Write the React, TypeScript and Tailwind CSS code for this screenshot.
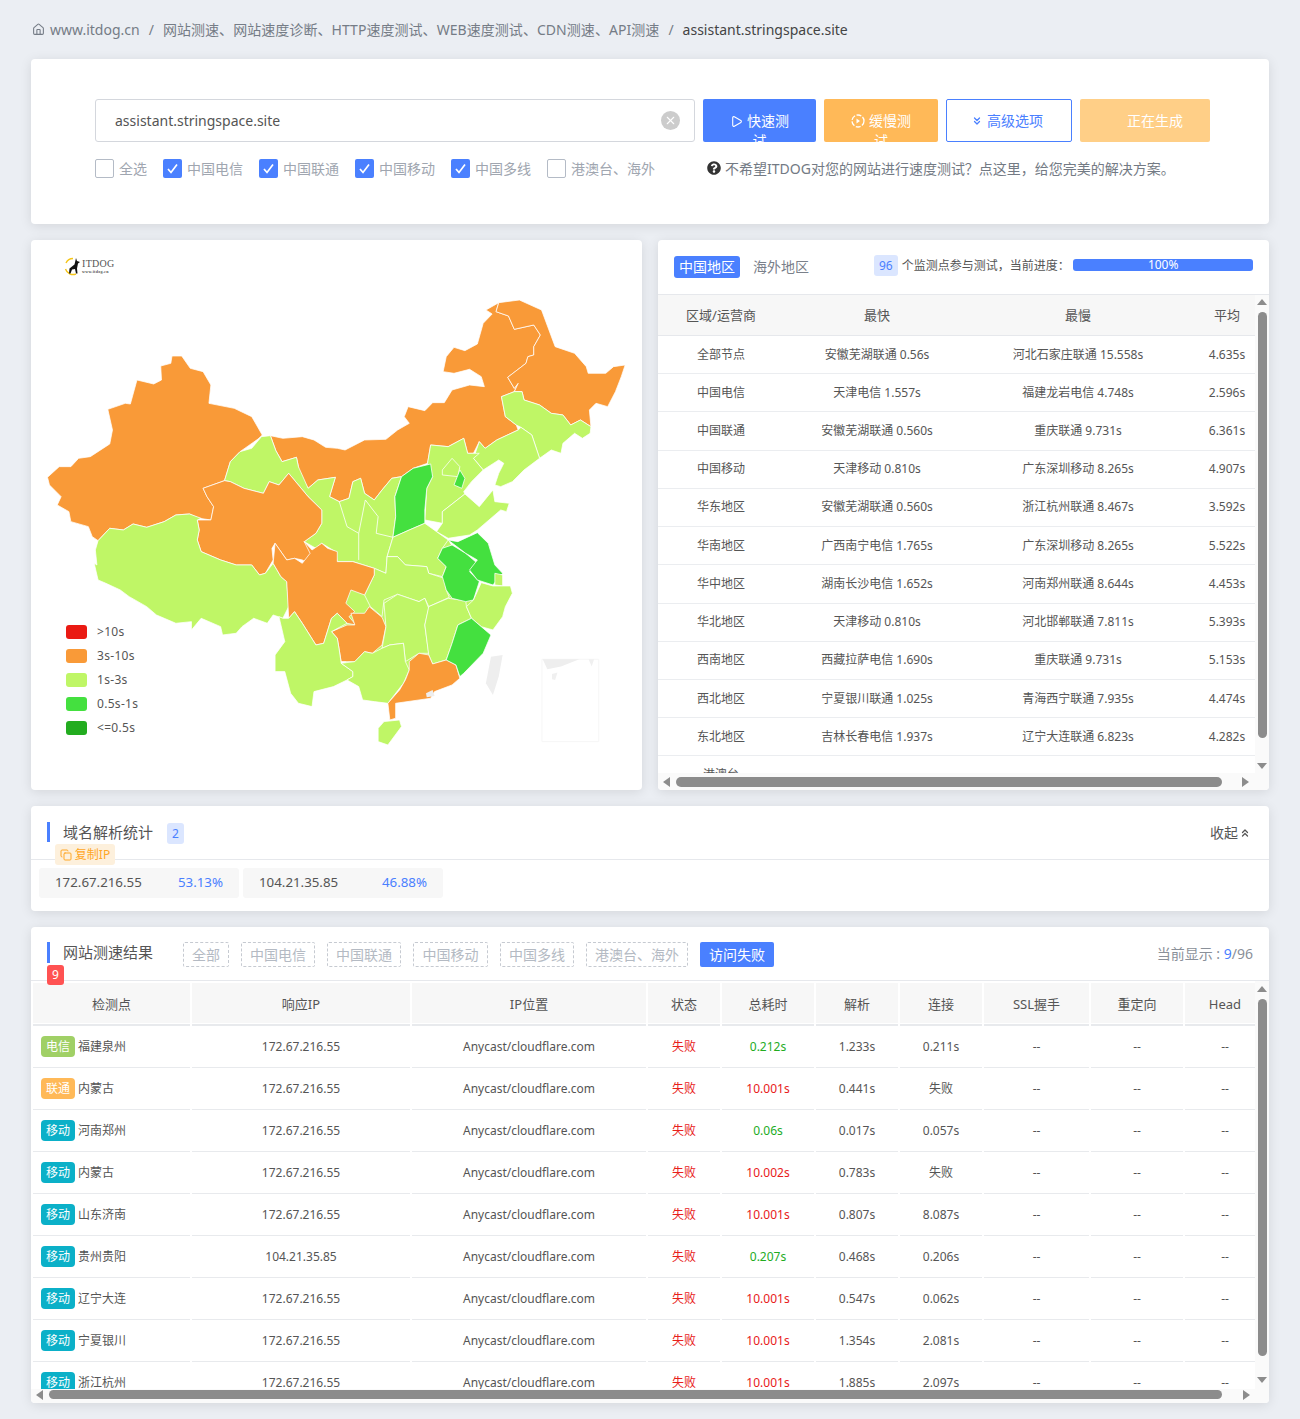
import { ChevronsDown, ChevronsUp, Copy, House, Play, X } from "lucide-react";
import { FaQuestionCircle } from "react-icons/fa";

const FONT = { fontFamily: '"Noto Sans", "Noto Sans CJK SC", sans-serif' };

const CHECKS = [
  { label: "全选", on: false, w: "w-[68px]" },
  { label: "中国电信", on: true, w: "w-[96px]" },
  { label: "中国联通", on: true, w: "w-[96px]" },
  { label: "中国移动", on: true, w: "w-[96px]" },
  { label: "中国多线", on: true, w: "w-[96px]" },
  { label: "港澳台、海外", on: false, w: "w-[160px]" },
];

const SUMMARY = [
  ["全部节点", "安徽芜湖联通 0.56s", "河北石家庄联通 15.558s", "4.635s"],
  ["中国电信", "天津电信 1.557s", "福建龙岩电信 4.748s", "2.596s"],
  ["中国联通", "安徽芜湖联通 0.560s", "重庆联通 9.731s", "6.361s"],
  ["中国移动", "天津移动 0.810s", "广东深圳移动 8.265s", "4.907s"],
  ["华东地区", "安徽芜湖联通 0.560s", "浙江杭州联通 8.467s", "3.592s"],
  ["华南地区", "广西南宁电信 1.765s", "广东深圳移动 8.265s", "5.522s"],
  ["华中地区", "湖南长沙电信 1.652s", "河南郑州联通 8.644s", "4.453s"],
  ["华北地区", "天津移动 0.810s", "河北邯郸联通 7.811s", "5.393s"],
  ["西南地区", "西藏拉萨电信 1.690s", "重庆联通 9.731s", "5.153s"],
  ["西北地区", "宁夏银川联通 1.025s", "青海西宁联通 7.935s", "4.474s"],
  ["东北地区", "吉林长春电信 1.937s", "辽宁大连联通 6.823s", "4.282s"],
  ["港澳台", "", "", ""],
];

const RESULTS = [
  { isp: "电信", name: "福建泉州", ip: "172.67.216.55", total: "0.212s", fast: true, dns: "1.233s", conn: "0.211s" },
  { isp: "联通", name: "内蒙古", ip: "172.67.216.55", total: "10.001s", fast: false, dns: "0.441s", conn: "失败" },
  { isp: "移动", name: "河南郑州", ip: "172.67.216.55", total: "0.06s", fast: true, dns: "0.017s", conn: "0.057s" },
  { isp: "移动", name: "内蒙古", ip: "172.67.216.55", total: "10.002s", fast: false, dns: "0.783s", conn: "失败" },
  { isp: "移动", name: "山东济南", ip: "172.67.216.55", total: "10.001s", fast: false, dns: "0.807s", conn: "8.087s" },
  { isp: "移动", name: "贵州贵阳", ip: "104.21.35.85", total: "0.207s", fast: true, dns: "0.468s", conn: "0.206s" },
  { isp: "移动", name: "辽宁大连", ip: "172.67.216.55", total: "10.001s", fast: false, dns: "0.547s", conn: "0.062s" },
  { isp: "移动", name: "宁夏银川", ip: "172.67.216.55", total: "10.001s", fast: false, dns: "1.354s", conn: "2.081s" },
  { isp: "移动", name: "浙江杭州", ip: "172.67.216.55", total: "10.001s", fast: false, dns: "1.885s", conn: "2.097s" },
];

const ISP_COLOR: Record<string, string> = {
  电信: "bg-[#a0d066]",
  联通: "bg-[#ffb958]",
  移动: "bg-[#0bb0c8]",
};

const HEAD = ["检测点", "响应IP", "IP位置", "状态", "总耗时", "解析", "连接", "SSL握手", "重定向", "Head"];
const COLS = "grid grid-cols-[157px_218px_234px_72px_92px_82px_82px_105px_92px_80px] gap-x-[2px]";

const FILTERS = [
  { label: "全部", w: "w-[46px]" },
  { label: "中国电信", w: "w-[74px]" },
  { label: "中国联通", w: "w-[74px]" },
  { label: "中国移动", w: "w-[75px]" },
  { label: "中国多线", w: "w-[74px]" },
  { label: "港澳台、海外", w: "w-[102px]" },
];

const LEGEND = [
  { label: ">10s", color: "bg-[#ea1a13]" },
  { label: "3s-10s", color: "bg-[#f99a38]" },
  { label: "1s-3s", color: "bg-[#bff666]" },
  { label: "0.5s-1s", color: "bg-[#44e03f]" },
  { label: "<=0.5s", color: "bg-[#22ac1f]" },
];

const ORANGE = "#f99a38";
const LIGHT = "#bff666";
const MID = "#44e03f";

const PROVINCES: [string, string][] = [
  // backdrop for the seams between the central provinces
  [LIGHT, "760,860 933,892 1075,900 1140,1030 1135,1135 1085,1260 1030,1290 960,1330 830,1300 795,1230 790,1120 800,1010"],
  // xinjiang
  [ORANGE, "45,712 75,680 105,680 125,655 155,650 205,612 212,570 200,508 245,490 258,492 275,420 318,432 338,420 336,378 362,370 365,348 390,348 412,385 445,395 465,435 460,490 525,505 570,530 597,585 585,600 595,590 540,635 515,665 500,722 445,745 455,770 472,800 465,840 435,835 410,822 375,825 345,845 300,862 265,852 240,870 205,865 175,902 160,890 150,860 105,845 100,815 70,795 80,770 50,735"],
  // inner mongolia
  [ORANGE, "618,587 650,595 700,590 730,600 760,622 790,625 810,630 860,600 915,598 945,570 975,550 962,530 972,500 1015,512 1035,488 1065,488 1085,450 1130,435 1168,440 1160,410 1130,388 1090,400 1062,395 1070,350 1090,322 1118,332 1150,312 1165,250 1188,222 1172,210 1205,188 1198,215 1230,228 1245,268 1295,255 1312,285 1295,320 1295,345 1280,350 1275,370 1228,412 1245,445 1255,430 1245,455 1212,470 1222,530 1250,555 1255,570 1200,600 1170,625 1155,605 1140,640 1125,640 1115,595 1075,620 1030,615 1022,670 985,685 955,710 930,715 905,750 885,780 860,760 850,715 830,725 820,775 795,785 770,770 785,712 740,720 715,745 690,700 690,680 685,652 648,665 632,632"],
  // heilongjiang
  [ORANGE, "1205,188 1258,180 1315,210 1350,320 1400,340 1430,380 1435,400 1480,400 1500,380 1530,375 1520,410 1505,455 1485,500 1455,490 1438,510 1442,560 1415,540 1390,555 1370,525 1340,520 1310,495 1270,480 1265,455 1245,455 1255,430 1245,445 1228,412 1275,370 1280,350 1295,345 1295,320 1312,285 1295,255 1245,268 1230,228 1198,215"],
  // jilin
  [LIGHT, "1212,470 1245,455 1265,455 1270,480 1310,495 1340,520 1370,525 1390,555 1415,540 1442,560 1440,580 1420,595 1400,580 1370,610 1365,640 1340,630 1310,655 1290,585 1262,562 1250,555 1222,530"],
  // liaoning
  [LIGHT, "1262,562 1290,585 1310,655 1270,690 1240,725 1210,740 1195,735 1205,700 1218,670 1205,660 1165,690 1140,655 1155,605 1170,625 1200,600 1255,570"],
  // hebei
  [LIGHT, "1022,670 1030,615 1075,620 1115,595 1125,640 1155,640 1140,655 1165,690 1135,725 1115,755 1118,762 1060,815 1060,850 1015,840 1020,745 1035,710"],
  [LIGHT, "1060,690 1085,655 1105,680 1100,710 1060,705"],
  [MID, "1105,690 1118,715 1110,745 1090,735"],
  // gansu, ningxia
  [LIGHT, "500,722 515,665 540,635 570,625 595,590 618,587 632,632 648,665 685,652 690,680 715,745 740,720 785,712 770,770 795,785 820,775 830,725 850,715 860,760 885,780 905,750 930,715 955,710 938,770 940,830 933,892 918,950 915,1000 885,985 830,965 790,965 785,935 750,910 735,925 705,905 735,880 750,850 750,810 715,770 665,700 640,735 615,725 600,760 550,745 515,725"],
  // qinghai
  [ORANGE, "445,745 500,722 515,725 550,745 600,760 615,725 640,735 665,700 715,770 750,810 750,850 735,880 705,905 725,930 715,970 700,960 680,955 660,960 630,910 622,925 625,960 605,1000 590,1005 570,975 530,975 490,960 440,935 430,900 435,870 430,840 465,840 472,800 455,770"],
  // tibet
  [LIGHT, "175,902 205,865 240,870 265,852 300,862 345,845 375,825 410,822 440,835 430,840 435,870 430,900 440,935 490,960 530,975 570,975 590,1005 605,1000 625,970 645,1010 660,1025 665,1100 650,1135 625,1125 610,1150 575,1135 545,1160 530,1180 495,1185 490,1160 440,1135 415,1170 415,1145 375,1150 345,1135 325,1125 300,1100 255,1070 232,1050 195,1030 175,1020 165,970 172,975 168,930"],
  // shanxi
  [MID, "985,685 1030,672 1035,710 1020,745 1015,810 1015,850 975,870 933,892 940,830 938,770 955,710"],
  // shandong
  [LIGHT, "1060,815 1118,762 1155,800 1190,750 1195,785 1232,790 1225,815 1210,810 1150,870 1130,885 1075,895 1045,875 1060,850"],
  // henan
  [LIGHT, "933,892 975,870 1015,850 1045,875 1075,900 1060,925 1048,955 1070,980 1060,1010 1025,1000 1020,980 965,975 945,950 918,950"],
  // hubei, chongqing
  [LIGHT, "885,985 915,1000 918,950 945,950 965,975 1020,980 1025,1000 1065,1015 1070,1050 1078,1072 1025,1100 1015,1075 1000,1085 975,1075 945,1063 910,1080 905,1130 875,1100 860,1065 885,1005"],
  // sichuan
  [ORANGE, "625,970 630,910 660,960 680,955 700,970 720,940 705,905 725,930 750,910 765,925 790,935 790,965 830,965 885,985 885,1005 860,1065 825,1050 812,1090 835,1115 820,1130 838,1155 815,1150 790,1120 775,1135 755,1210 735,1215 700,1150 680,1115 665,1135 660,1025 645,1010"],
  // guizhou
  [ORANGE, "775,1175 815,1155 835,1155 825,1120 860,1120 872,1100 905,1132 915,1160 905,1215 880,1240 860,1235 835,1265 800,1265 795,1230 790,1195"],
  // yunnan
  [LIGHT, "640,1130 650,1135 665,1135 680,1115 700,1150 735,1215 755,1210 775,1135 790,1120 815,1150 775,1175 790,1195 795,1230 800,1270 830,1295 830,1310 815,1320 780,1340 730,1355 725,1400 690,1390 670,1360 655,1295 630,1295 630,1245 655,1205"],
  // hunan
  [LIGHT, "910,1090 945,1063 975,1075 1000,1085 1015,1075 1025,1105 1015,1155 1025,1240 1000,1240 965,1265 960,1210 925,1215 905,1225 915,1160"],
  // jiangxi
  [LIGHT, "1025,1100 1075,1075 1120,1082 1122,1100 1135,1135 1100,1155 1085,1210 1070,1260 1035,1272 1025,1245 1015,1155"],
  // guangxi
  [LIGHT, "800,1270 835,1265 860,1235 880,1240 905,1225 925,1215 960,1210 965,1265 975,1290 960,1330 920,1390 885,1385 855,1380 845,1340 815,1320 830,1310 830,1295"],
  // guangdong
  [ORANGE, "975,1290 975,1265 1000,1240 1025,1245 1035,1272 1070,1260 1095,1275 1105,1315 1085,1335 1040,1355 1030,1375 1000,1380 940,1390 940,1435 925,1440 920,1390 950,1350 965,1320"],
  // hainan
  [LIGHT, "910,1445 950,1440 955,1460 920,1515 895,1505 895,1465"],
  // anhui
  [MID, "1085,915 1120,940 1150,970 1130,995 1155,1025 1140,1080 1120,1085 1085,1075 1070,1050 1060,1010 1070,980 1048,955 1060,925"],
  // jiangsu
  [MID, "1075,900 1100,905 1150,878 1178,910 1195,975 1215,1000 1190,1035 1150,1020 1130,990 1150,960 1120,940"],
  // zhejiang, shanghai
  [LIGHT, "1195,1000 1215,1005 1215,1038 1195,1035"],
  [LIGHT, "1160,1028 1190,1038 1235,1038 1240,1060 1222,1100 1215,1130 1190,1170 1160,1160 1135,1135 1122,1100 1140,1080"],
  // fujian
  [MID, "1135,1135 1160,1160 1185,1185 1165,1240 1115,1300 1105,1310 1095,1275 1070,1260 1085,1210 1100,1155"],
];

function ChinaMap() {
  return (
    <svg viewBox="0 0 611 550" className="block h-[550px] w-[611px]">
      <g transform="translate(-1 0) scale(0.389 0.3333)">
        {PROVINCES.map(([fill, points], i) => (
          <polygon key={i} points={points} fill={fill} stroke="#ffffff" strokeOpacity={i === 0 ? 0 : 0.75} strokeWidth={1} vectorEffect="non-scaling-stroke" strokeLinejoin="round" />
        ))}
        <polyline points="795,785 815,860 845,880 845,960" fill="none" stroke="#fff" strokeOpacity={0.8} strokeWidth={1} vectorEffect="non-scaling-stroke" />
        <polyline points="845,880 862,780 895,830 890,880 933,892" fill="none" stroke="#fff" strokeOpacity={0.8} strokeWidth={1} vectorEffect="non-scaling-stroke" />
        {/* taiwan, hong kong */}
        <polygon points="1185,1250 1215,1245 1205,1310 1190,1365 1172,1330" fill="#eeeeee" />
        <polygon points="1018,1360 1035,1350 1040,1368 1020,1372" fill="#eeeeee" />
        {/* south china sea box */}
        <rect x="1316" y="1258" width="146" height="247" fill="none" stroke="#f6f6f6" strokeWidth={1} vectorEffect="non-scaling-stroke" />
        <polygon points="1318,1258 1412,1258 1365,1280 1330,1288" fill="#eeeeee" />
        <polygon points="1436,1258 1450,1258 1444,1280" fill="#f0f0f0" />
        <polygon points="1342,1302 1356,1298 1350,1320 1342,1318" fill="#f0f0f0" />
      </g>
    </svg>
  );
}

function Logo() {
  return (
    <div className="absolute left-[33px] top-[17px] flex items-center gap-[1px]">
      <svg width="17" height="19" viewBox="0 0 17 19">
        <path d="M9 1.5A8 8 0 0 0 2 6M1.5 12A8 8 0 0 0 12 17" fill="none" stroke="#f5c518" strokeWidth="1.4" />
        <path d="M12 1l1 3 3 1-2 1.500-1 5 .5 5h-1.500l-1-4.500-3 .5-1.500 4H5l.5-5 5-4z" fill="#111111" />
      </svg>
      <div className="flex w-[34px] flex-col leading-none text-[#555]" style={{ fontFamily: '"Liberation Serif", serif' }}>
        <span className="text-[10px] leading-[10px] tracking-[0.3px]">ITDOG</span>
        <span className="text-[4px] font-bold leading-[5px] tracking-[0.3px]">www.itdog.cn</span>
      </div>
    </div>
  );
}

function Tri({ dir }: { dir: "up" | "down" | "left" | "right" }) {
  const points = {
    up: "5,1 10,7 0,7",
    down: "0,1 10,1 5,7",
    left: "8,0 8,10 1,5",
    right: "0,0 0,10 7,5",
  }[dir];
  const box = dir === "up" || dir === "down" ? "0 0 10 8" : "0 0 8 10";
  const size = dir === "up" || dir === "down" ? "h-[8px] w-[10px]" : "h-[10px] w-[8px]";
  return (
    <svg viewBox={box} className={`${size} flex-none`}>
      <polygon points={points} fill="#8c8c8c" />
    </svg>
  );
}

function Check({ on }: { on: boolean }) {
  return on ? (
    <span className="grid h-[19px] w-[19px] flex-none place-items-center rounded-[2px] bg-[#4a80ff]">
      <svg width="13" height="13" viewBox="0 0 13 13" fill="none" stroke="#fff" strokeWidth="1.7">
        <path d="M2 7l3 3.500 6-8" />
      </svg>
    </span>
  ) : (
    <span className="h-[19px] w-[19px] flex-none rounded-[2px] border border-[#b4bbc6] bg-white" />
  );
}

function SearchCard() {
  return (
    <section className="h-[165px] rounded-[4px] bg-white pl-[64px] pt-[40px] shadow-[0_2px_12px_rgba(0,0,0,0.1)]">
      <div className="flex h-[43px] gap-[8px]">
        <div className="flex w-[600px] items-center justify-between rounded-[3px] border border-[#d4d7dd] pl-[19px] pr-[14px] text-sm text-[#555]">
          <span>assistant.stringspace.site</span>
          <span className="grid h-[19px] w-[19px] place-items-center rounded-full bg-[#cccccc]">
            <X size={13} color="#fff" strokeWidth={2} />
          </span>
        </div>
        <button className="h-[43px] w-[113px] overflow-hidden rounded-[2px] bg-[#4a80ff] px-[23px] pt-[12px] text-center text-sm leading-[20px] text-white">
          <Play size={13} className="mr-[4px] inline align-[-2px]" />
          快速测试
        </button>
        <button className="h-[43px] w-[114px] overflow-hidden rounded-[2px] bg-[#ffb958] px-[23px] pt-[12px] text-center text-sm leading-[20px] text-white">
          <svg width="14" height="14" viewBox="0 0 14 14" className="mr-[4px] inline align-[-2px]" fill="none" stroke="#fff" strokeWidth="1.300">
            <circle cx="7" cy="7" r="6" strokeDasharray="5 1.500" />
            <path d="M5.500 4.500v5l3.500-2.500z" fill="#fff" stroke="none" />
          </svg>
          缓慢测试
        </button>
        <button className="flex h-[43px] w-[126px] items-center justify-center gap-[4px] rounded-[2px] border border-[#4a80ff] bg-white pr-[4px] text-sm text-[#4a80ff]">
          <ChevronsDown size={12} strokeWidth={2.5} />
          高级选项
        </button>
        <button className="h-[43px] w-[130px] overflow-hidden rounded-[2px] bg-[#ffcf87] px-[25px] pt-[12px] text-center text-sm leading-[20px] text-white">
          <span className="inline-block w-[20px]" />
          正在生成
          <br />…
        </button>
      </div>
      <div className="mt-[16px] flex h-[20px] items-center">
        {CHECKS.map((c) => (
          <div key={c.label} className={`flex ${c.w} flex-none items-center gap-[5px] text-sm text-[#a0a6b0]`}>
            <Check on={c.on} />
            <span className="whitespace-nowrap pt-[1px]">{c.label}</span>
          </div>
        ))}
        <div className="flex items-center gap-[4px] whitespace-nowrap text-sm text-[#737a84]">
          <FaQuestionCircle size={14} color="#333" />
          <span className="pt-[1px]">不希望ITDOG对您的网站进行速度测试？点这里，给您完美的解决方案。</span>
        </div>
      </div>
    </section>
  );
}

function SummaryCard() {
  const cols = "grid w-[610px] grid-cols-[126px_186px_216px_82px] text-center";
  return (
    <section className="flex h-[550px] w-[611px] flex-col overflow-hidden rounded-[4px] bg-white shadow-[0_2px_12px_rgba(0,0,0,0.1)]">
      <div className="flex h-[55px] flex-none items-center border-b border-[#e6e8ec] pl-[16px] pr-[16px]">
        <span className="flex-none whitespace-nowrap rounded-[3px] bg-[#4a80ff] px-[5px] text-sm leading-[22px] text-white">中国地区</span>
        <span className="ml-[13px] flex-none whitespace-nowrap text-sm text-[#7a808a]">海外地区</span>
        <span className="-mt-[3px] ml-[65px] rounded-[3px] bg-[#dbe6ff] px-[5px] text-xs leading-[21px] text-[#4a80ff]">96</span>
        <span className="-mt-[3px] ml-[4px] w-[172px] whitespace-nowrap text-xs text-[#555]">个监测点参与测试，当前进度：</span>
        <div className="-mt-[4px] h-[12px] w-[180px] rounded-[3px] bg-[#4a80ff] text-center text-xs leading-[12px] text-white">100%</div>
      </div>
      <div className="flex min-h-0 flex-1">
        <div className="min-w-0 flex-1 overflow-hidden">
          <div className={`${cols} h-[41px] items-center border-b border-[#e6e8ec] bg-[#f7f7f7] pt-[1px] text-[13px] text-[#555]`}>
            <span>区域/运营商</span>
            <span>最快</span>
            <span>最慢</span>
            <span>平均</span>
          </div>
          {SUMMARY.map((r) => (
            <div key={r[0]} className={`${cols} h-[38.220px] items-center border-b border-[#ebedf0] text-xs text-[#555]`}>
              {r.map((v, i) => (
                <span key={i}>{v}</span>
              ))}
            </div>
          ))}
        </div>
        <div className="flex w-[14px] flex-none flex-col items-center bg-[#fafafa] pt-[3px]">
          <Tri dir="up" />
          <div className="mt-[6px] h-[426px] w-[9px] rounded-full bg-[#8c8c8c]" />
          <div className="mt-[24px]">
            <Tri dir="down" />
          </div>
        </div>
      </div>
      <div className="flex h-[17px] flex-none items-center bg-[#fafafa] pl-[4px]">
        <Tri dir="left" />
        <div className="ml-[6px] h-[10px] w-[546px] rounded-full bg-[#8c8c8c]" />
        <div className="ml-[20px]">
          <Tri dir="right" />
        </div>
      </div>
    </section>
  );
}

function DnsCard() {
  return (
    <section className="h-[105px] rounded-[4px] bg-white shadow-[0_2px_12px_rgba(0,0,0,0.1)]">
      <div className="relative flex h-[54px] items-start border-b border-[#e6e8ec] pl-[16px] pr-[18px] pt-[16px]">
        <span className="h-[20px] border-l-[3px] border-[#4a80ff] pl-[13px] text-[15px] leading-[21px] text-[#555]">域名解析统计</span>
        <span className="ml-[14px] mt-[1px] rounded-[3px] bg-[#dbe6ff] px-[5px] text-xs leading-[21px] text-[#4a80ff]">2</span>
        <span className="ml-auto flex items-center gap-[1px] text-sm leading-[22px] text-[#555]">
          收起
          <ChevronsUp size={12} strokeWidth={2.5} />
        </span>
        <span className="absolute left-[24px] top-[38px] flex h-[21px] w-[60px] items-center justify-center gap-[3px] rounded-[3px] bg-[#fdf0dc] text-xs text-[#ffa726]">
          <Copy size={12} />
          复制IP
        </span>
      </div>
      <div className="flex gap-[4px] pl-[8px] pt-[8px]">
        <div className="flex h-[30px] w-[200px] items-center justify-between rounded-[3px] bg-[#f7f7f7] px-[16px] text-[13.300px] text-[#555]">
          <span>172.67.216.55</span>
          <span className="text-[#4a80ff]">53.13%</span>
        </div>
        <div className="flex h-[30px] w-[200px] items-center justify-between rounded-[3px] bg-[#f7f7f7] px-[16px] text-[13.300px] text-[#555]">
          <span>104.21.35.85</span>
          <span className="text-[#4a80ff]">46.88%</span>
        </div>
      </div>
    </section>
  );
}

function ResultsCard() {
  return (
    <section className="flex h-[476px] flex-col overflow-hidden rounded-[4px] bg-white shadow-[0_2px_12px_rgba(0,0,0,0.1)]">
      <div className="relative flex h-[54px] flex-none items-start border-b border-[#e6e8ec] pl-[16px] pr-[16px] pt-[15px]">
        <span className="h-[21px] w-[136px] flex-none border-l-[3px] border-[#4a80ff] pl-[13px] text-[15px] leading-[21px] text-[#555]">网站测速结果</span>
        <div className="flex gap-[12px]">
          {FILTERS.map((f) => (
            <span key={f.label} className={`${f.w} h-[25px] flex-none rounded-[2px] border border-dashed border-[#c6cad1] text-center text-sm leading-[23px] text-[#b4bac3]`}>
              {f.label}
            </span>
          ))}
          <span className="h-[25px] w-[74px] flex-none rounded-[2px] bg-[#4a80ff] text-center text-sm leading-[25px] text-white">访问失败</span>
        </div>
        <span className="ml-auto pt-[1px] text-sm leading-[22px] text-[#8a9099]">
          当前显示 : <span className="text-[#4a80ff]">9</span>/96
        </span>
        <span className="absolute left-[16px] top-[38px] h-[20px] w-[17px] rounded-[3px] bg-[#ff5252] text-center text-xs leading-[20px] text-white">9</span>
      </div>
      <div className="flex min-h-0 flex-1">
        <div className="min-w-0 flex-1 overflow-hidden pl-[2px]">
          <div className={`${COLS} mt-[2px]`}>
            {HEAD.map((h) => (
              <div key={h} className="h-[43px] border-b-2 border-[#e8eaed]">
                <div className="h-[40px] bg-[#f7f7f7] text-center text-[13px] leading-[42px] text-[#555]">{h}</div>
              </div>
            ))}
          </div>
          {RESULTS.map((r) => (
            <div key={r.name + r.ip + r.total} className={`${COLS} text-center text-xs text-[#555]`}>
              <div className="flex h-[42px] items-center gap-[3px] border-b border-[#e8eaed] pl-[8px]">
                <span className={`${ISP_COLOR[r.isp]} h-[21px] w-[34px] rounded-[4px] leading-[21px] text-white`}>{r.isp}</span>
                {r.name}
              </div>
              <div className="h-[42px] border-b border-[#e8eaed] leading-[41px]">{r.ip}</div>
              <div className="h-[42px] border-b border-[#e8eaed] leading-[41px]">Anycast/cloudflare.com</div>
              <div className="h-[42px] border-b border-[#e8eaed] leading-[41px] text-[#e8201a]">失败</div>
              <div className={`h-[42px] border-b border-[#e8eaed] leading-[41px] ${r.fast ? "text-[#22ac1f]" : "text-[#e8201a]"}`}>{r.total}</div>
              <div className="h-[42px] border-b border-[#e8eaed] leading-[41px]">{r.dns}</div>
              <div className="h-[42px] border-b border-[#e8eaed] leading-[41px]">{r.conn}</div>
              <div className="h-[42px] border-b border-[#e8eaed] leading-[41px]">--</div>
              <div className="h-[42px] border-b border-[#e8eaed] leading-[41px]">--</div>
              <div className="h-[42px] border-b border-[#e8eaed] leading-[41px]">--</div>
            </div>
          ))}
        </div>
        <div className="flex w-[14px] flex-none flex-col items-center bg-[#fafafa] pt-[4px]">
          <Tri dir="up" />
          <div className="mt-[6px] h-[357px] w-[9px] rounded-full bg-[#8c8c8c]" />
          <div className="mt-[20px]">
            <Tri dir="down" />
          </div>
        </div>
      </div>
      <div className="flex h-[14px] flex-none items-start bg-[#fafafa] pl-[4px] pt-[1px]">
        <Tri dir="left" />
        <div className="ml-[6px] h-[9px] w-[1173px] rounded-full bg-[#8c8c8c]" />
        <div className="ml-[21px]">
          <Tri dir="right" />
        </div>
      </div>
    </section>
  );
}

export default function App() {
  return (
    <div className="h-[1419px] bg-[#ebeef3] px-[31px]" style={FONT}>
      <nav className="flex h-[59px] items-center whitespace-nowrap text-sm text-[#757c86]">
        <House size={13} className="ml-[1px] mr-[5px]" />
        <span>www.itdog.cn</span>
        <span className="mx-[9px]">/</span>
        <span className="tracking-[0.05px]">网站测速、网站速度诊断、HTTP速度测试、WEB速度测试、CDN测速、API测速</span>
        <span className="mx-[9px]">/</span>
        <span className="text-[#444]">assistant.stringspace.site</span>
      </nav>
      <SearchCard />
      <div className="mt-[16px] flex justify-between">
        <section className="relative h-[550px] w-[611px] overflow-hidden rounded-[4px] bg-white shadow-[0_2px_12px_rgba(0,0,0,0.1)]">
          <ChinaMap />
          <Logo />
          <div className="absolute left-[35px] top-[385px] flex flex-col gap-[10px]">
            {LEGEND.map((l) => (
              <div key={l.label} className="flex h-[14px] items-center gap-[10px] text-xs text-[#555]">
                <span className={`${l.color} h-[14px] w-[21px] rounded-[3px]`} />
                <span className="-mt-[1px] tracking-[0.3px]">{l.label}</span>
              </div>
            ))}
          </div>
        </section>
        <SummaryCard />
      </div>
      <div className="mt-[16px]">
        <DnsCard />
      </div>
      <div className="mt-[16px]">
        <ResultsCard />
      </div>
    </div>
  );
}
